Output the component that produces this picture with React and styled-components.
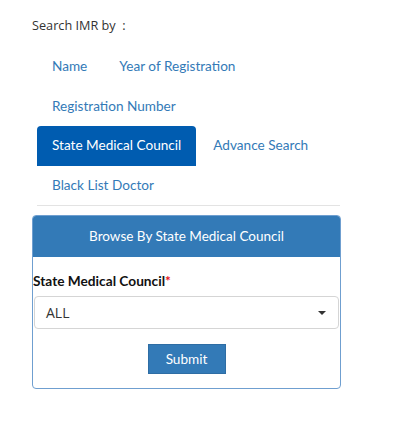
import React, { useState } from 'react';
import styled, { createGlobalStyle } from 'styled-components';

const GlobalStyle = createGlobalStyle`
  html, body {
    margin: 0;
    padding: 0;
    background: #fff;
  }
  body {
    font-family: Lato, "Open Sans", sans-serif;
    color: #333;
  }
  * {
    box-sizing: border-box;
  }
`;

const Page = styled.div`
  width: 402px;
  height: 424px;
  padding: 16px 0 0 32px;
`;

const Heading = styled.div`
  font-family: "Open Sans", sans-serif;
  font-size: 12.7px;
  line-height: 18px;
  color: #333;
  margin-bottom: 13px;
`;

const Tabs = styled.ul`
  list-style: none;
  margin: 0 0 9px 5px;
  padding: 0;
  width: 303px;
  display: flex;
  flex-wrap: wrap;
  border-bottom: 1px solid #e3e3e3;
`;

const TabItem = styled.li`
  margin-right: 2px;
`;

const TabLink = styled.button`
  display: block;
  border: 0;
  cursor: pointer;
  height: 39.5px;
  padding: 0 15px;
  font-family: Lato, sans-serif;
  font-size: 13.6px;
  line-height: 39.5px;
  border-radius: 4px 4px 0 0;
  background: ${(p) => (p.$active ? '#005cb0' : 'transparent')};
  color: ${(p) => (p.$active ? '#fff' : '#337ab7')};
  white-space: nowrap;
`;

const Panel = styled.div`
  width: 309px;
  border: 1px solid #6f9fd0;
  border-radius: 4px;
  overflow: hidden;
`;

const PanelHeader = styled.div`
  height: 41px;
  background: #337ab7;
  color: #fff;
  font-size: 13.5px;
  line-height: 41px;
  text-align: center;
`;

const PanelBody = styled.div`
  padding: 14px 0 14px 0;
`;

const Label = styled.label`
  display: block;
  font-weight: bold;
  font-size: 13.7px;
  line-height: 20px;
  color: #111;
  margin-bottom: 5px;
`;

const Star = styled.span`
  color: #e8101a;
`;

const SelectBox = styled.div`
  position: relative;
  margin: 0 1px;
  height: 33px;
  border: 1px solid #d5d5d5;
  border-radius: 4px;
  background: #fff;
  display: flex;
  align-items: center;
  padding-left: 11px;
  font-family: "Open Sans", sans-serif;
  font-size: 14px;
  color: #333;
`;

const Caret = styled.span`
  position: absolute;
  right: 12px;
  top: 14px;
  width: 0;
  height: 0;
  border-left: 4px solid transparent;
  border-right: 4px solid transparent;
  border-top: 4px solid #333;
`;

const Actions = styled.div`
  display: flex;
  justify-content: center;
  margin-top: 15px;
`;

const SubmitButton = styled.button`
  width: 78px;
  height: 30px;
  border: 1px solid #2e6da4;
  background: #337ab7;
  color: #fff;
  font-family: Lato, sans-serif;
  font-size: 13.6px;
  cursor: pointer;
`;

const tabs = [
  'Name',
  'Year of Registration',
  'Registration Number',
  'State Medical Council',
  'Advance Search',
  'Black List Doctor',
];

export default function App() {
  const [active, setActive] = useState('State Medical Council');
  return (
    <Page>
      <GlobalStyle />
      <Heading>Search IMR by &nbsp;:</Heading>
      <Tabs>
        {tabs.map((t) => (
          <TabItem key={t}>
            <TabLink $active={t === active} onClick={() => setActive(t)}>
              {t}
            </TabLink>
          </TabItem>
        ))}
      </Tabs>
      <Panel>
        <PanelHeader>Browse By State Medical Council</PanelHeader>
        <PanelBody>
          <Label>
            State Medical Council<Star>*</Star>
          </Label>
          <SelectBox>
            ALL
            <Caret />
          </SelectBox>
          <Actions>
            <SubmitButton>Submit</SubmitButton>
          </Actions>
        </PanelBody>
      </Panel>
    </Page>
  );
}
